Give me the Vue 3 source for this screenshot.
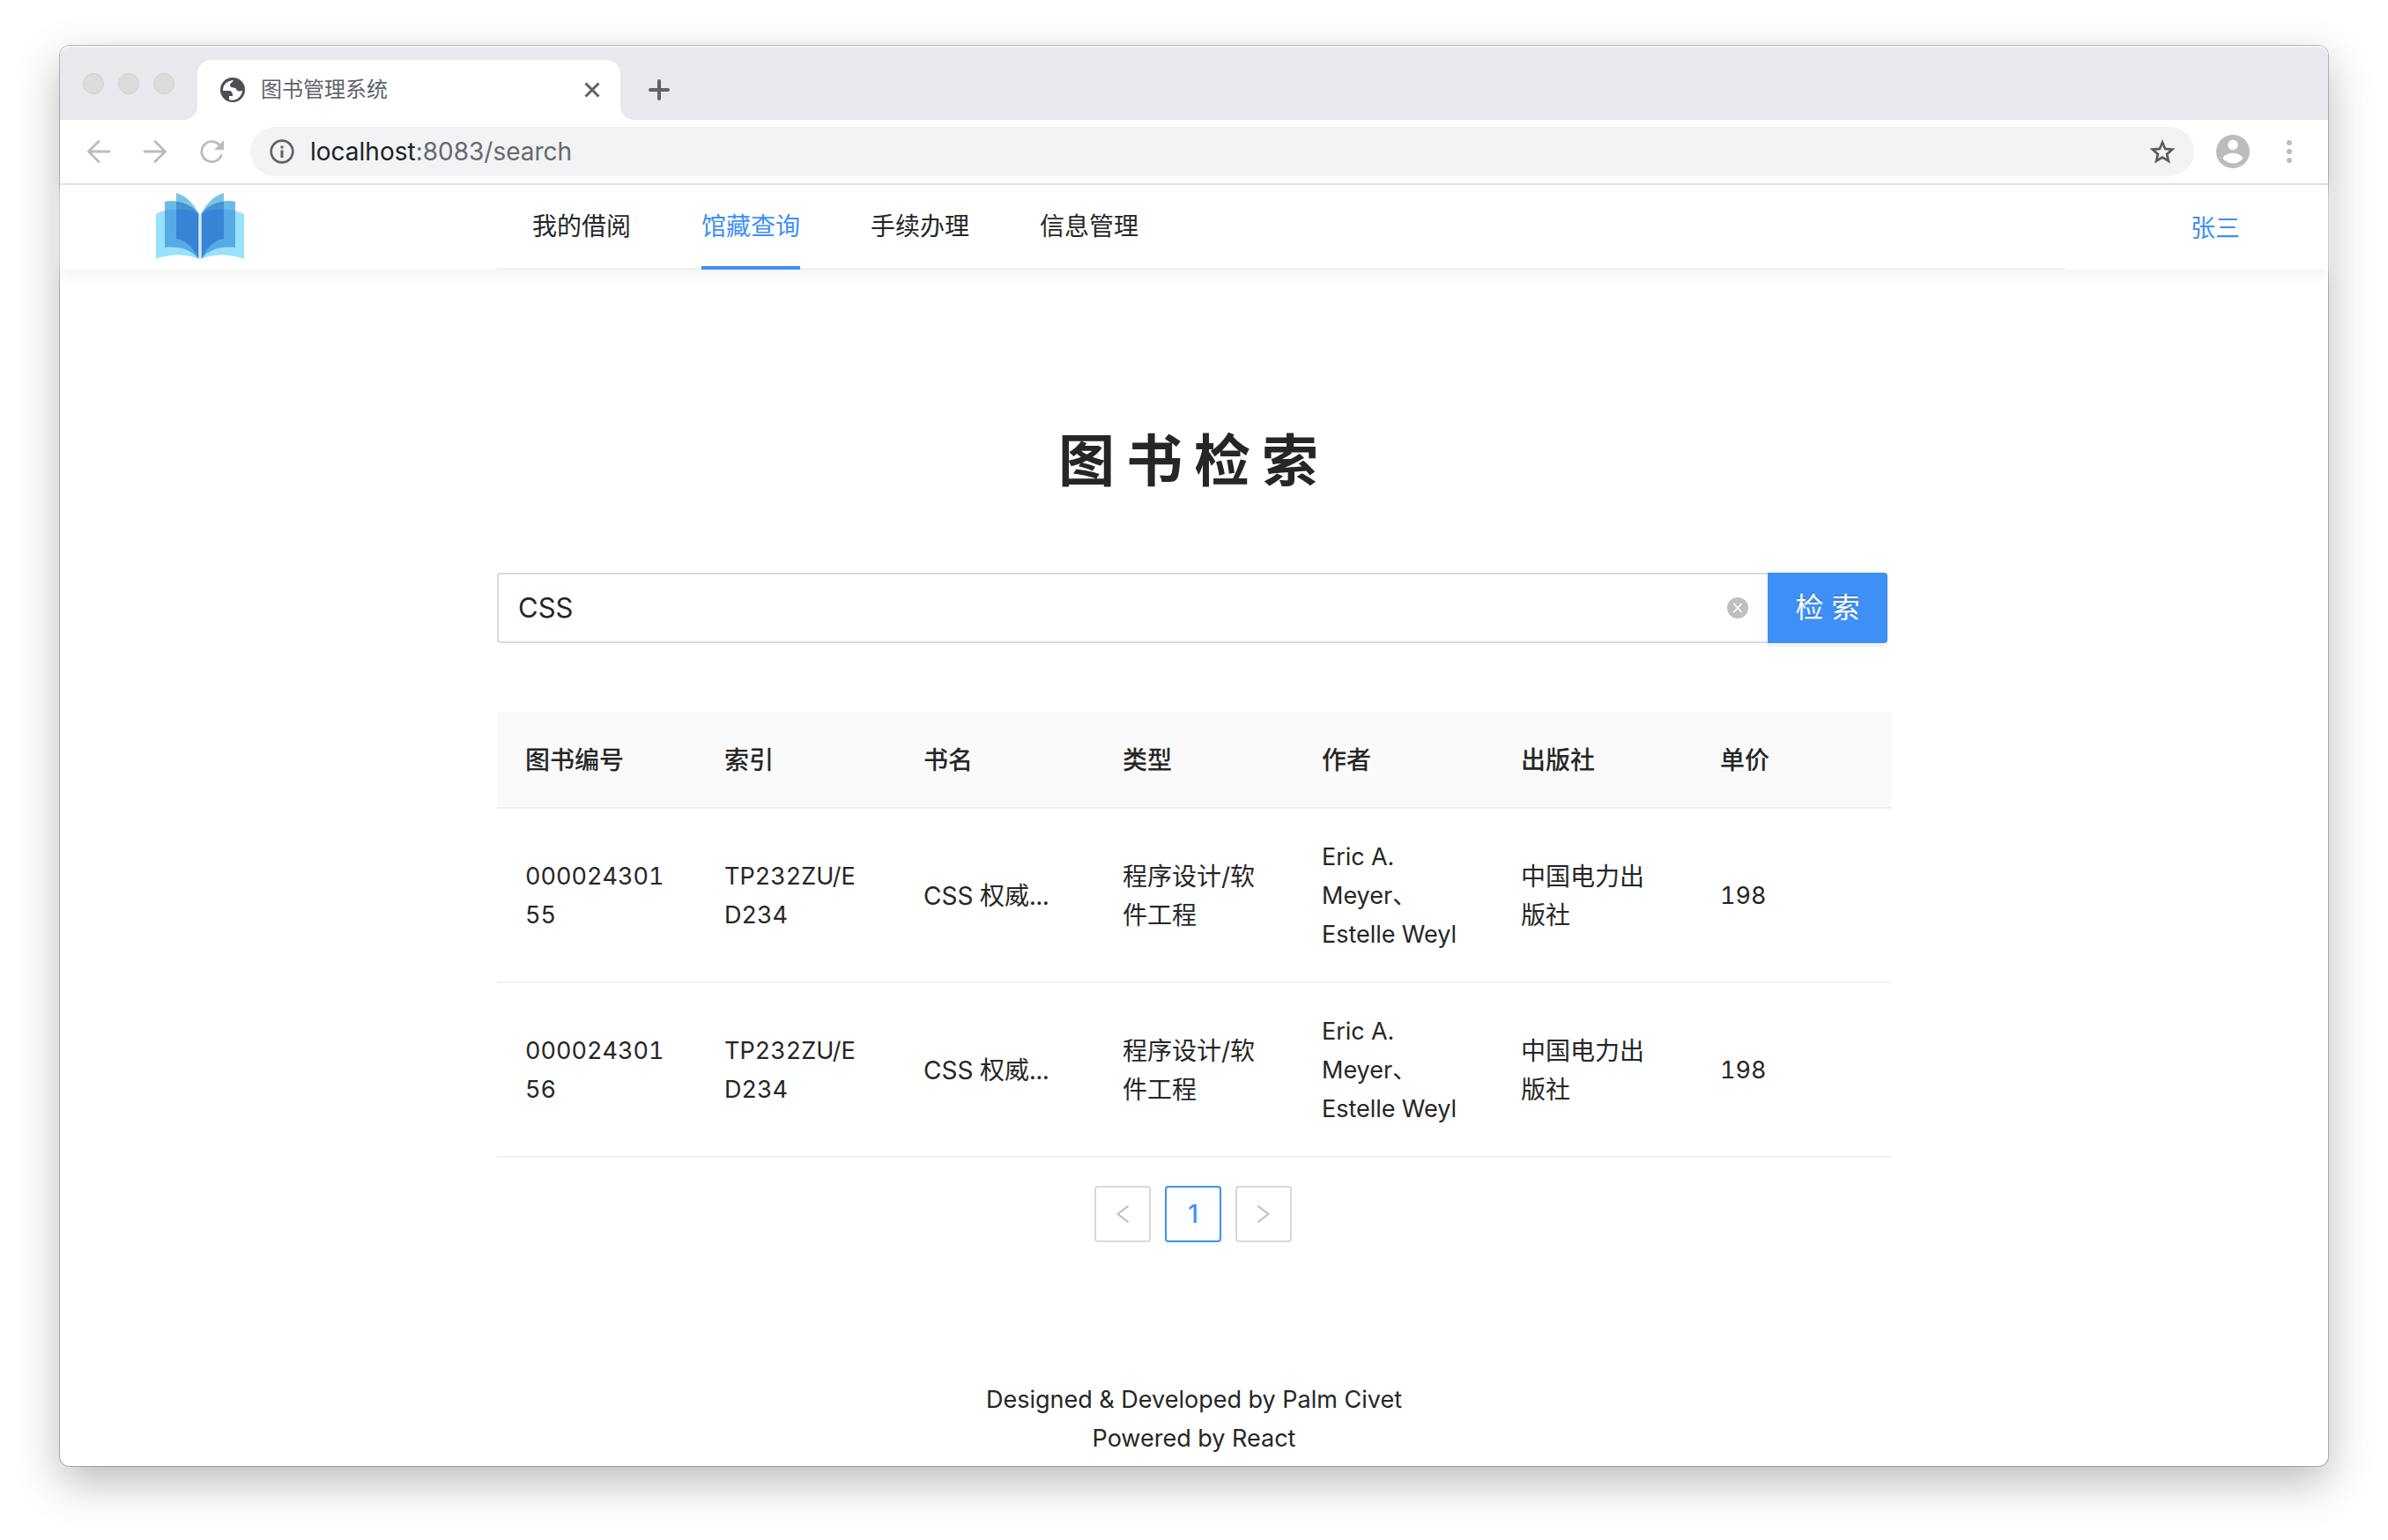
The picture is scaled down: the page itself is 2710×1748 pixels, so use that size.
<script setup>
import { ref } from 'vue'

const keyword = ref('CSS')
const menu = ['我的借阅', '馆藏查询', '手续办理', '信息管理']
const current = ref('馆藏查询')

const columns = [
  { key: 'id', title: '图书编号', latin: true },
  { key: 'index', title: '索引', latin: true },
  { key: 'name', title: '书名' },
  { key: 'type', title: '类型' },
  { key: 'author', title: '作者', latin: true },
  { key: 'press', title: '出版社' },
  { key: 'price', title: '单价', latin: true },
]

const book = {
  index: 'TP232ZU/ED234',
  name: 'CSS 权威...',
  type: '程序设计/软件工程',
  author: 'Eric A. Meyer、Estelle Weyl',
  press: '中国电力出版社',
  price: 198,
}
const rows = [
  { id: '00002430155', ...book },
  { id: '00002430156', ...book },
]
</script>

<template>
  <div class="desktop">
    <div class="window">
      <div class="tab-strip">
        <div class="lights"><i></i><i></i><i></i></div>
        <div class="tab">
          <svg class="globe" viewBox="0 0 28 28" aria-hidden="true">
            <circle cx="14" cy="14" r="14" fill="#4d4f55" />
            <path d="M15 3.300C9 3.200 3.200 7 3 14.500v.5h7c2.500 0 4 2 4 5v1h-4v4.200c7 2 14.500-2.500 15-10.700-1.500 1-3 1.300-5 .7-2-1-1.500-3-4-3.500-3-.5-5-.5-5-3.200 0-2 3-3 4-5.200z" fill="#fff" />
          </svg>
          <span class="tab-title">图书管理系统</span>
          <button class="icon-btn" aria-label="关闭标签页">
            <svg width="18" height="18" viewBox="0 0 18 18"><path d="M1.500 1.500l15 15M16.500 1.500l-15 15" stroke="#5f6368" stroke-width="3" /></svg>
          </button>
        </div>
        <button class="icon-btn add" aria-label="新标签页">
          <svg width="24" height="24" viewBox="0 0 24 24"><path d="M12 2v20M2 12h20" stroke="#5f6368" stroke-width="4" stroke-linecap="round" /></svg>
        </button>
      </div>

      <div class="toolbar">
        <div class="controls">
          <button class="icon-btn" aria-label="后退">
            <svg width="28" height="28" viewBox="0 0 28 28"><path d="M26 14H3M14 2.500L2.500 14 14 25.500" fill="none" stroke="#babcbe" stroke-width="2.800" stroke-linecap="round" /></svg>
          </button>
          <button class="icon-btn" aria-label="前进">
            <svg width="28" height="28" viewBox="0 0 28 28"><path d="M2 14h23M14 2.500L25.500 14 14 25.500" fill="none" stroke="#babcbe" stroke-width="2.800" stroke-linecap="round" /></svg>
          </button>
          <button class="icon-btn" aria-label="重新加载">
            <svg width="28" height="28" viewBox="0 0 28 28"><path d="M25 18.500A11.500 11.500 0 1 1 22.500 6" fill="none" stroke="#babcbe" stroke-width="2.800" stroke-linecap="round" /><path d="M28 1v11H17z" fill="#babcbe" /></svg>
          </button>
        </div>
        <div class="address">
          <svg width="28" height="28" viewBox="0 0 28 28" aria-hidden="true"><circle cx="14" cy="14" r="12.300" fill="none" stroke="#5f6368" stroke-width="2.700" /><path d="M14 12.500V21M14 7.500v3" stroke="#5f6368" stroke-width="3" /></svg>
          <span class="url" role="textbox" aria-label="地址"><b>localhost</b>:8083/search</span>
          <button class="icon-btn" aria-label="加入书签">
            <svg width="30" height="28" viewBox="0 0 30 28"><path d="M15 3.500l3.100 7.400 8.100.7-6.100 5.300 1.800 7.800-6.900-4.100-6.900 4.100 1.800-7.800-6.100-5.300 8.100-.7z" fill="none" stroke="#5a5c5f" stroke-width="2.700" /></svg>
          </button>
        </div>
        <button class="icon-btn account" aria-label="账户">
          <svg width="38" height="38" viewBox="0 0 38 38"><circle cx="19" cy="19" r="19" fill="#babcbe" /><circle cx="19" cy="11.500" r="5.700" fill="#fff" /><path d="M7.500 26.500C9.500 22.500 15 20.800 19 20.800s9.500 1.700 11.500 5.700C28 30.300 23.500 32.300 19 32.300S10 30.300 7.500 26.500z" fill="#fff" /></svg>
        </button>
        <button class="icon-btn" aria-label="更多">
          <svg width="6" height="26" viewBox="0 0 6 26"><circle cx="3" cy="3" r="3" fill="#babcbe" /><circle cx="3" cy="13" r="3" fill="#babcbe" /><circle cx="3" cy="23" r="3" fill="#babcbe" /></svg>
        </button>
      </div>

      <header class="header">
        <a class="logo" href="#" aria-label="首页">
          <svg width="100" height="76" viewBox="0 0 100 76">
            <g id="page">
              <path d="M0 24C14 16 36 17 48.500 24V75C36 69 14 69 0 75z" fill="#99e2fb" />
              <path d="M10 10C24 7 42 13 48.500 24V75C40 64 26 60 10 62z" fill="#56aae6" />
              <path d="M23 0C34 3 43 12 48.500 24L48 24C40 13 34 10 23 10z" fill="#77c4e8" />
              <path d="M10 10C14 9 19 9 23 10V18.500C18 18.500 14 19 10 20z" fill="#6bbbe7" />
              <path d="M23 10C34 10 43 16 48.500 24V28C42 21 34 19 23 18.500z" fill="#4294d2" />
              <path d="M23 18.500C34 18.500 43 20 48.500 24V75C43 63 35 54 23 52z" fill="#3983d6" />
            </g>
            <use href="#page" transform="matrix(-1 0 0 1 100 0)" />
            <path d="M50 24v51" stroke="#dcebf7" stroke-width="3" />
          </svg>
        </a>
        <nav class="menu">
          <a v-for="item in menu" :key="item" href="#" :class="{ active: item === current }" @click.prevent="current = item">{{ item }}</a>
        </nav>
        <a class="user" href="#">张三</a>
      </header>

      <main class="main">
        <h1>图书检索</h1>
        <form class="search" @submit.prevent>
          <div class="field">
            <input v-model="keyword" type="text" aria-label="检索关键字" />
            <button type="button" class="icon-btn" aria-label="清空" @click="keyword = ''">
              <svg width="24" height="24" viewBox="0 0 24 24"><circle cx="12" cy="12" r="12" fill="#bfbfbf" /><path d="M7.500 7l9 10M16.500 7l-9 10" stroke="#fff" stroke-width="1.800" /></svg>
            </button>
          </div>
          <button class="submit">检 索</button>
        </form>

        <table>
          <thead>
            <tr><th v-for="col in columns" :key="col.key" scope="col">{{ col.title }}</th></tr>
          </thead>
          <tbody>
            <tr v-for="row in rows" :key="row.id">
              <td v-for="col in columns" :key="col.key" :class="{ latin: col.latin }">{{ row[col.key] }}</td>
            </tr>
          </tbody>
        </table>

        <div class="pagination">
          <button disabled aria-label="上一页">
            <svg width="14" height="20" viewBox="0 0 14 20"><path d="M13.500 .8L1.500 10l12 9.200" fill="none" stroke="#bfbfbf" stroke-width="2" /></svg>
          </button>
          <button class="active">1</button>
          <button disabled aria-label="下一页">
            <svg width="14" height="20" viewBox="0 0 14 20"><path d="M.5 .8l12 9.200-12 9.200" fill="none" stroke="#bfbfbf" stroke-width="2" /></svg>
          </button>
        </div>
      </main>

      <footer class="footer">
        <div>Designed &amp; Developed by Palm Civet</div>
        <div>Powered by React</div>
      </footer>
    </div>
  </div>
</template>

<style>
body {
  background: #fff;
}
</style>

<style scoped>
* {
  box-sizing: border-box;
}
.desktop {
  padding: 52px 68px 84px;
  font-family: Inter, "Noto Sans CJK SC", sans-serif;
  font-size: 28px;
  line-height: 44px;
  color: #262626;
}
button,
input {
  margin: 0;
  padding: 0;
  font: inherit;
  color: inherit;
  border: 0;
  background: none;
}
a {
  color: inherit;
  text-decoration: none;
}
svg {
  display: block;
}
.icon-btn {
  flex: none;
}
.window {
  border-radius: 11px;
  background: #fff;
  box-shadow: 0 0 0 1px rgba(0, 0, 0, 0.24), 0 18px 50px rgba(0, 0, 0, 0.27);
}

/* browser frame */
.tab-strip {
  display: flex;
  align-items: flex-end;
  height: 84px;
  padding-left: 26px;
  border-radius: 11px 11px 0 0;
  background: #e8e9ed;
  box-shadow: inset 0 2px 0 #f3f4f5;
}
.lights {
  display: flex;
  gap: 16px;
  align-self: center;
  margin: 2px 26px 0 0;
}
.lights i {
  width: 24px;
  height: 24px;
  border: 1px solid #cfcfcf;
  border-radius: 50%;
  background: #dcdcdc;
}
.tab {
  position: relative;
  display: flex;
  align-items: center;
  width: 480px;
  height: 68px;
  padding: 0 23px 0 26px;
  border-radius: 16px 16px 0 0;
  background: #fff;
}
.tab::before,
.tab::after {
  content: "";
  position: absolute;
  bottom: 0;
  width: 16px;
  height: 16px;
}
.tab::before {
  left: -16px;
  background: radial-gradient(circle at 0 0, transparent 16px, #fff 16px);
}
.tab::after {
  right: -16px;
  background: radial-gradient(circle at 100% 0, transparent 16px, #fff 16px);
}
.globe {
  width: 28px;
  height: 28px;
}
.tab-title {
  flex: 1;
  margin-left: 18px;
  font-size: 24px;
  color: #5f6368;
}
.add {
  align-self: center;
  margin: 16px 0 0 32px;
}
.toolbar {
  display: flex;
  align-items: center;
  height: 74px;
  padding: 0 41px 0 30px;
  border-bottom: 2px solid #dadbe2;
}
.controls {
  display: flex;
  gap: 36px;
}
.address {
  display: flex;
  flex: 1;
  align-items: center;
  height: 56px;
  margin: 0 25px 0 30px;
  padding: 0 21px 0 22px;
  border-radius: 28px;
  background: #f1f3f5;
}
.url {
  flex: 1;
  margin-left: 18px;
  color: #67696d;
}
.url b {
  font-weight: 400;
  color: #202124;
}
.account {
  margin-right: 42px;
}

/* site header */
.header {
  display: flex;
  height: 96px;
  box-shadow: 0 4px 16px #f0f1f2;
}
.logo {
  width: 496px;
  padding: 9px 0 0 109px;
}
.menu {
  display: flex;
  flex: 1;
  gap: 80px;
  padding-left: 40px;
  border-bottom: 2px solid #f0f0f0;
}
.menu a {
  height: 96px;
  line-height: 94px;
}
.menu .active {
  color: #3e90f7;
  border-bottom: 4px solid #3e90f7;
}
.user {
  width: 298px;
  padding-right: 100px;
  line-height: 98px;
  text-align: right;
  color: #3e90f7;
}

/* search page */
.main {
  padding: 176px 496px 0;
}
h1 {
  margin: 0 0 86px;
  font-size: 64px;
  line-height: 82px;
  font-weight: 700;
  letter-spacing: 13px;
  text-align: center;
}
.search {
  display: flex;
  height: 80px;
  margin: 0 4px 78px 0;
  font-size: 32px;
}
.field {
  display: flex;
  flex: 1;
  align-items: center;
  padding: 0 22px;
  border: 2px solid #d9d9d9;
  border-right: 0;
  border-radius: 4px 0 0 4px;
}
.field input {
  flex: 1;
  min-width: 0;
  font-size: 31px;
  outline: 0;
}
.submit {
  width: 136px;
  border-radius: 0 4px 4px 0;
  background: #3e90f7;
  color: #fff;
  text-shadow: 0 -2px 0 rgba(0, 0, 0, 0.12);
  box-shadow: 0 4px 0 rgba(0, 0, 0, 0.045);
}
table {
  width: 100%;
  table-layout: fixed;
  border-collapse: separate;
  border-spacing: 0;
  font-variant-numeric: tabular-nums;
}
th,
td {
  padding: 33px 32px 31px;
  border-bottom: 2px solid #f0f0f0;
  text-align: left;
  overflow-wrap: break-word;
}
th {
  background: #fafafa;
  font-weight: 500;
}
th:first-child {
  border-top-left-radius: 4px;
}
th:last-child {
  border-top-right-radius: 4px;
}
.latin {
  font-size: 27px;
}
.pagination {
  display: flex;
  justify-content: center;
  gap: 16px;
  margin-top: 32px;
  padding-right: 2px;
}
.pagination button {
  display: flex;
  align-items: center;
  justify-content: center;
  width: 64px;
  height: 64px;
  border: 2px solid #d9d9d9;
  border-radius: 4px;
}
.pagination .active {
  border-color: #3e90f7;
  color: #3e90f7;
  font-weight: 500;
}
.footer {
  padding: 157px 0 9px;
  font-size: 27px;
  text-align: center;
}
</style>
